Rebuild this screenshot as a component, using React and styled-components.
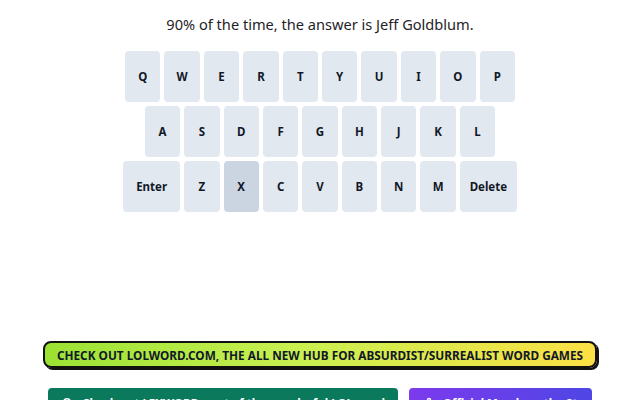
import styled, { createGlobalStyle } from "styled-components"

const GlobalStyle = createGlobalStyle`
  html, body {
    margin: 0;
    padding: 0;
    background: #ffffff;
  }
  body {
    font-family: "Noto Sans", "Open Sans", sans-serif;
    color: #111827;
  }
`

const rows = [
  ["Q", "W", "E", "R", "T", "Y", "U", "I", "O", "P"],
  ["A", "S", "D", "F", "G", "H", "J", "K", "L"],
  ["Enter", "Z", "X", "C", "V", "B", "N", "M", "Delete"],
]

// letters already tried get the darker key
const used = ["X"]

export default function App() {
  return (
    <Page>
      <GlobalStyle />
      <Hint>90% of the time, the answer is Jeff Goldblum.</Hint>

      <Keyboard>
        {rows.map((row, i) => (
          <KeyRow key={i}>
            {row.map((k) => (
              <Key key={k} $wide={k.length > 1} $used={used.includes(k)}>
                {k}
              </Key>
            ))}
          </KeyRow>
        ))}
      </Keyboard>

      <Banner>CHECK OUT LOLWORD.COM, THE ALL NEW HUB FOR ABSURDIST/SURREALIST WORD GAMES</Banner>

      <LinkRow>
        <LinkButton $tone="green">
          <SearchIcon />
          Check out LEXWORD, part of the wonderful LOL word games
        </LinkButton>
        <LinkButton $tone="purple">
          <BagIcon />
          Official Merch on the Store
        </LinkButton>
      </LinkRow>
    </Page>
  )
}

function SearchIcon() {
  return (
    <Icon viewBox="0 0 24 24" fill="none" stroke="currentColor" strokeWidth="3" strokeLinecap="round">
      <circle cx="10" cy="10" r="6.5" />
      <path d="M15 15l6 6" />
    </Icon>
  )
}

function BagIcon() {
  return (
    <Icon viewBox="0 0 24 24" fill="none" stroke="currentColor" strokeWidth="3" strokeLinecap="round" strokeLinejoin="round">
      <path d="M5 8h14l-1 13H6z" />
      <path d="M9 8V6a3 3 0 0 1 6 0v2" />
    </Icon>
  )
}

const Page = styled.div`
  width: 640px;
  height: 400px;
  overflow: hidden;
  display: flex;
  flex-direction: column;
  align-items: center;
  & > * {
    flex-shrink: 0;
  }
`

const Hint = styled.div`
  margin-top: 14px;
  font-size: 14.6px;
  line-height: 20px;
  color: #1f2328;
`

const Keyboard = styled.div`
  margin-top: 17px;
  display: flex;
  flex-direction: column;
  gap: 4px;
`

const KeyRow = styled.div`
  display: flex;
  justify-content: center;
  gap: 4px;
`

const Key = styled.div`
  width: ${(p) => (p.$wide ? "57px" : "35.4px")};
  height: 51px;
  border-radius: 4px;
  background: ${(p) => (p.$used ? "#cbd5e1" : "#e2e8f0")};
  display: flex;
  align-items: center;
  justify-content: center;
  font-size: 11.5px;
  font-weight: 700;
  color: #111827;
`

const Banner = styled.div`
  margin-top: 129px;
  width: 554px;
  height: 27px;
  box-sizing: border-box;
  border: 2px solid #111;
  border-radius: 8px;
  box-shadow: 2px 2px 0 #111;
  background: linear-gradient(90deg, #9be234 0%, #c8f050 45%, #fbe045 100%);
  display: flex;
  align-items: center;
  justify-content: center;
  font-size: 11.8px;
  font-weight: 700;
  color: #111827;
  white-space: nowrap;
`

const LinkRow = styled.div`
  margin-top: 20px;
  display: flex;
  gap: 11px;
`

const tones = {
  green: "#0b7a5c",
  purple: "linear-gradient(90deg, #7c3aed, #4f46e5)",
}

const LinkButton = styled.div`
  width: ${(p) => (p.$tone === "green" ? "350px" : "183px")};
  height: 30px;
  box-sizing: border-box;
  padding: 0 14px;
  border-radius: 4px;
  background: ${(p) => tones[p.$tone]};
  color: #ffffff;
  display: flex;
  align-items: center;
  gap: 8px;
  font-size: 11.5px;
  font-weight: 700;
  white-space: nowrap;
  overflow: hidden;
`

const Icon = styled.svg`
  width: 12px;
  height: 12px;
  flex-shrink: 0;
`
